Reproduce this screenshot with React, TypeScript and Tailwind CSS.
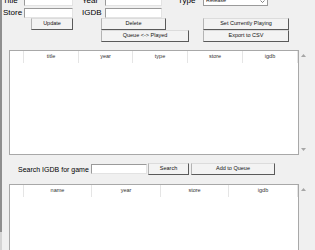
const btn =
  "flex items-center justify-center h-[12px] bg-[#f3f3f3] border border-t-[#dcdcdc] border-l-[#b4b4b4] border-r-[#5a5a5a] border-b-[#5a5a5a] text-[5.5px] text-[#111] leading-none";
const input = "h-[10px] bg-white border border-[#9a9a9a] border-r-[#e3e3e3] border-b-[#e3e3e3]";
const label = "text-[8px] leading-none text-black";

function UpArrow() {
  return (
    <svg width="5" height="3" viewBox="0 0 5 3" className="block">
      <path d="M0 3 L2.5 0 L5 3 Z" fill="#a6a6a6" />
    </svg>
  );
}

function DownArrow() {
  return (
    <svg width="5" height="3" viewBox="0 0 5 3" className="block">
      <path d="M0 0 L2.5 3 L5 0 Z" fill="#a6a6a6" />
    </svg>
  );
}

function Header({ cols }: { cols: { name: string; w: number }[] }) {
  return (
    <div className="flex h-[12px] bg-white">
      <div className="w-[14px] border-r border-[#e5e5e5]" />
      {cols.map((c) => (
        <div
          key={c.name}
          style={{ width: c.w }}
          className="flex items-center justify-center border-r border-[#e5e5e5] text-[5.5px] text-[#333] leading-none"
        >
          {c.name}
        </div>
      ))}
    </div>
  );
}

export default function App() {
  return (
    <div className="flex w-[315px] h-[250px] overflow-hidden bg-[#f0f0f0] font-['Liberation_Sans',Arial,sans-serif]">
      <div className="flex flex-col w-[2px] shrink-0">
        <div className="h-[232px] bg-[#8f8f8f]" />
        <div className="flex-1 bg-[#d4d4d4]" />
      </div>

      <div className="flex flex-col flex-1">
        {/* title / year / type */}
        <div className="flex items-center h-[10px] mt-[-4px]">
          <div className={`${label} w-[22px] pl-[1px]`}>Title</div>
          <div className={`${input} w-[49px]`} />
          <div className={`${label} w-[32px] pl-[9px]`}>Year</div>
          <div className={`${input} w-[57px]`} />
          <div className={`${label} w-[41px] pl-[16px]`}>Type</div>
          <div className="flex items-center justify-between w-[65px] h-[10px] bg-white border border-[#9a9a9a] px-[2px]">
            <span className="text-[5.5px] leading-none text-[#222]">Release</span>
            <svg width="5" height="3" viewBox="0 0 5 3">
              <path d="M0.5 0.5 L2.5 2.5 L4.5 0.5" stroke="#666" strokeWidth="0.8" fill="none" />
            </svg>
          </div>
        </div>

        {/* store / igdb */}
        <div className="flex items-center h-[10px] mt-[2px]">
          <div className={`${label} w-[22px] pl-[1px]`}>Store</div>
          <div className={`${input} w-[49px]`} />
          <div className={`${label} w-[32px] pl-[9px]`}>IGDB</div>
          <div className={`${input} w-[57px]`} />
        </div>

        {/* buttons */}
        <div className="flex h-[12px]">
          <div className={`${btn} ml-[29px] w-[42px]`}>Update</div>
          <div className={`${btn} ml-[28px] w-[65px]`}>Delete</div>
          <div className={`${btn} ml-[37px] w-[86px]`}>Set Currently Playing</div>
        </div>
        <div className="flex h-[12px]">
          <div className={`${btn} ml-[99px] w-[88px]`}>Queue &lt;-&gt; Played</div>
          <div className={`${btn} ml-[14px] w-[86px]`}>Export to CSV</div>
        </div>

        {/* played list */}
        <div className="flex mt-[8px]">
          <div className="ml-[7px] w-[290px] h-[105px] bg-white border border-[#a8a8a8]">
            <Header
              cols={[
                { name: "title", w: 55 },
                { name: "year", w: 54 },
                { name: "type", w: 55 },
                { name: "store", w: 55 },
                { name: "igdb", w: 55 },
              ]}
            />
          </div>
          <div className="flex flex-col justify-between ml-[2px] pt-[4px] pb-[4px]">
            <UpArrow />
            <DownArrow />
          </div>
        </div>

        {/* search */}
        <div className="flex items-center h-[12px] mt-[8px]">
          <div className="text-[7px] leading-none text-black ml-[16px] w-[73px]">Search IGDB for game</div>
          <div className={`${input} w-[56px]`} />
          <div className={`${btn} ml-[1px] w-[41px]`}>Search</div>
          <div className={`${btn} ml-[2px] w-[84px]`}>Add to Queue</div>
        </div>

        {/* igdb results list */}
        <div className="flex mt-[9px] flex-1">
          <div className="ml-[7px] w-[290px] h-[80px] bg-white border border-[#a8a8a8]">
            <Header
              cols={[
                { name: "name", w: 68 },
                { name: "year", w: 69 },
                { name: "store", w: 68 },
                { name: "igdb", w: 69 },
              ]}
            />
          </div>
          <div className="flex flex-col ml-[2px] pt-[4px]">
            <UpArrow />
          </div>
        </div>
      </div>
    </div>
  );
}
